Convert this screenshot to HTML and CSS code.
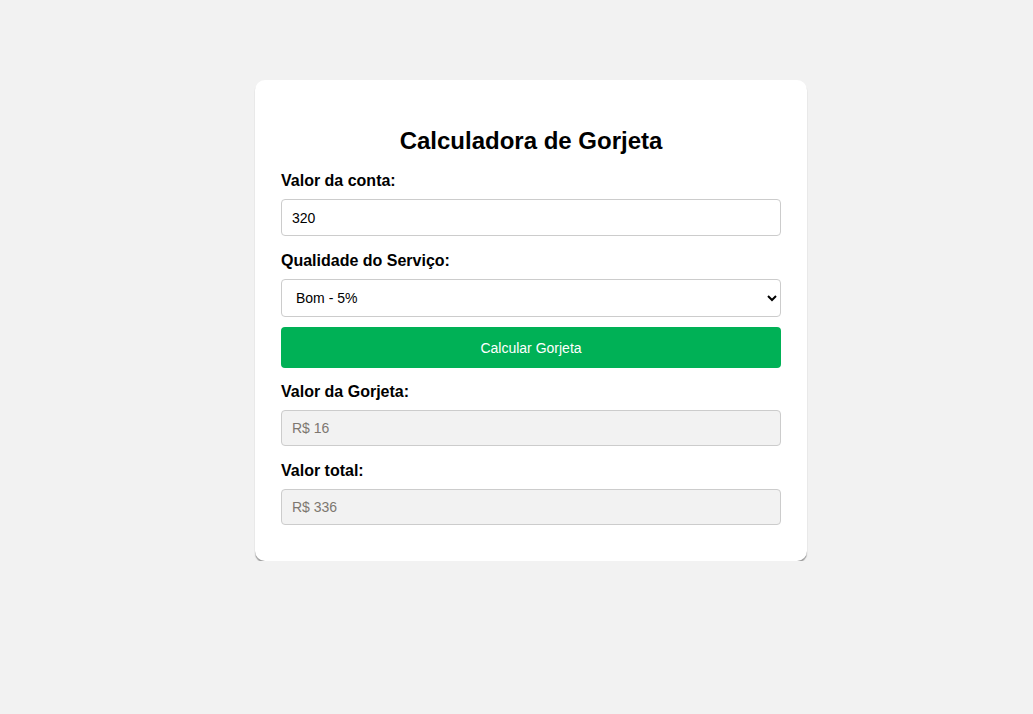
FILE: index.html
```html
<!DOCTYPE html>
<html lang="pt-BR">
<head>
<meta charset="utf-8">
<title>Calculadora de Gorjeta</title>
<link rel="stylesheet" href="styles.css">
</head>
<body>
<div class="card">
  <h1 class="title">Calculadora de Gorjeta</h1>
  <label class="label" for="conta">Valor da conta:</label>
  <input class="field" id="conta" type="text" value="320">
  <label class="label" for="servico">Qualidade do Serviço:</label>
  <select class="field select" id="servico">
    <option>Bom - 5%</option>
  </select>
  <button class="btn" type="button">Calcular Gorjeta</button>
  <label class="label" for="gorjeta">Valor da Gorjeta:</label>
  <input class="field readonly" id="gorjeta" type="text" value="R$ 16" disabled>
  <label class="label" for="total">Valor total:</label>
  <input class="field readonly" id="total" type="text" value="R$ 336" disabled>
</div>
</body>
</html>
```
FILE: styles.css
```css
html, body {
  margin: 0;
  padding: 0;
  background: #f2f2f2;
  font-family: "Liberation Sans", Arial, sans-serif;
}
body {
  padding: 80px 0 0 29px;
}
.card {
  box-sizing: border-box;
  width: 552px;
  margin: 0 auto;
  background: #fff;
  border-radius: 10px;
  box-shadow: 0 2px 1px rgba(0, 0, 0, 0.35);
  padding: 45px 26px 36px 26px;
  display: flex;
  flex-direction: column;
}
.title {
  margin: 0 0 15px 0;
  text-align: center;
  font-size: 24px;
  line-height: 32px;
  font-weight: bold;
  color: #000;
}
.label {
  display: block;
  font-size: 16px;
  font-weight: bold;
  line-height: 18px;
  color: #000;
  margin-bottom: 9px;
}
.field {
  box-sizing: border-box;
  width: 500px;
  height: 37px;
  border: 1px solid #ccc;
  border-radius: 4px;
  padding: 0 10px;
  font-family: "Liberation Sans", Arial, sans-serif;
  font-size: 14px;
  color: #000;
  background: #fff;
  margin: 0 0 16px 0;
  outline: none;
}
.select {
  height: 38px;
  margin-bottom: 10px;
}
.btn {
  box-sizing: border-box;
  width: 500px;
  height: 41px;
  border: none;
  border-radius: 4px;
  background: #00b156;
  color: #fff;
  font-family: "Liberation Sans", Arial, sans-serif;
  font-size: 14px;
  margin: 0 0 15px 0;
  cursor: pointer;
}
.readonly {
  height: 36px;
  background: #f2f2f2;
  color: #7d7770;
}
.readonly:last-child {
  margin-bottom: 0;
}
```
